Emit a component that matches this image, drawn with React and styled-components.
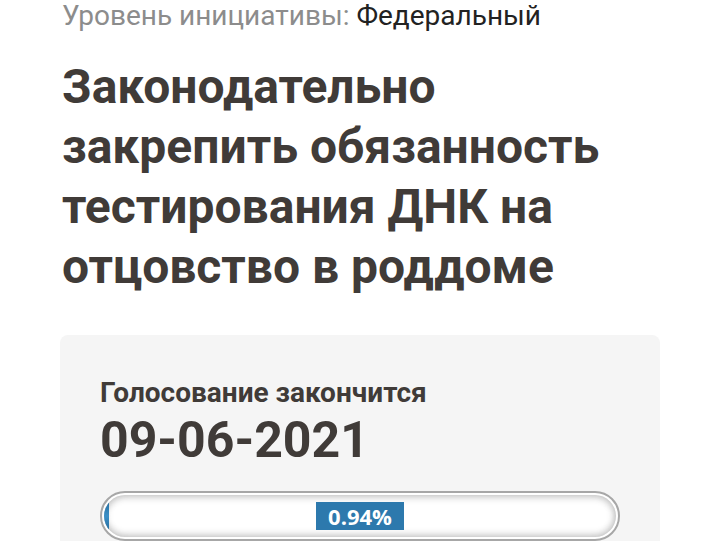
import React from 'react';
import styled, { createGlobalStyle } from 'styled-components';

const GlobalStyle = createGlobalStyle`
  body {
    margin: 0;
    background: #ffffff;
    font-family: Roboto, "Noto Sans", sans-serif;
  }
`;

const Page = styled.div`
  padding: 1px 60px 0 62px;
`;

const Level = styled.div`
  font-size: 28px;
  line-height: 30px;
  color: #8c8c8c;

  span {
    color: #222222;
  }
`;

const Title = styled.h1`
  margin: 26px 0 0;
  font-size: 48px;
  line-height: 60px;
  font-weight: 700;
  color: #403b38;
  max-width: 580px;
`;

const VoteCard = styled.section`
  margin: 38px 0 0 -2px;
  width: 600px;
  box-sizing: border-box;
  background: #f5f5f5;
  border-radius: 8px;
  padding: 42px 40px 20px 40px;
`;

const VoteLabel = styled.div`
  font-size: 28px;
  line-height: 32px;
  font-weight: 700;
  color: #403b38;
`;

const VoteDate = styled.div`
  font-size: 50px;
  line-height: 62px;
  font-weight: 700;
  color: #403b38;
`;

const Progress = styled.div`
  margin-top: 20px;
  height: 50px;
  border: 2px solid #a7a7a7;
  border-radius: 26px;
  box-sizing: border-box;
  padding: 2px;
  background: #fff;
  display: flex;
`;

const Track = styled.div`
  flex: 1;
  position: relative;
  border-radius: 22px;
  background: #ffffff;
  box-shadow: inset 0 4px 6px rgba(0, 0, 0, 0.12), inset 0 -4px 6px rgba(0, 0, 0, 0.12),
    inset 4px 0 6px rgba(0, 0, 0, 0.08), inset -4px 0 6px rgba(0, 0, 0, 0.08);
  overflow: hidden;
  display: flex;
  align-items: center;
  justify-content: center;
`;

const Fill = styled.div`
  position: absolute;
  left: 0;
  top: 0;
  bottom: 0;
  background: linear-gradient(to bottom, #1f5f8d, #3b8fc6 50%, #1f5f8d);
`;

const Percent = styled.span`
  position: relative;
  background: #2d79ad;
  color: #ffffff;
  font-family: "Open Sans", "DejaVu Sans", sans-serif;
  font-weight: 700;
  font-size: 22px;
  line-height: 28px;
  padding: 0 12px;
`;

export default function App() {
  const percent = 0.94;
  return (
    <>
      <GlobalStyle />
      <Page>
        <Level>
          Уровень инициативы: <span>Федеральный</span>
        </Level>
        <Title>Законодательно закрепить обязанность тестирования ДНК на отцовство в роддоме</Title>
        <VoteCard>
          <VoteLabel>Голосование закончится</VoteLabel>
          <VoteDate>09-06-2021</VoteDate>
          <Progress>
            <Track>
              <Fill style={{ width: `${Math.max(percent, 1)}%` }} />
              <Percent>{percent}%</Percent>
            </Track>
          </Progress>
        </VoteCard>
      </Page>
    </>
  );
}
